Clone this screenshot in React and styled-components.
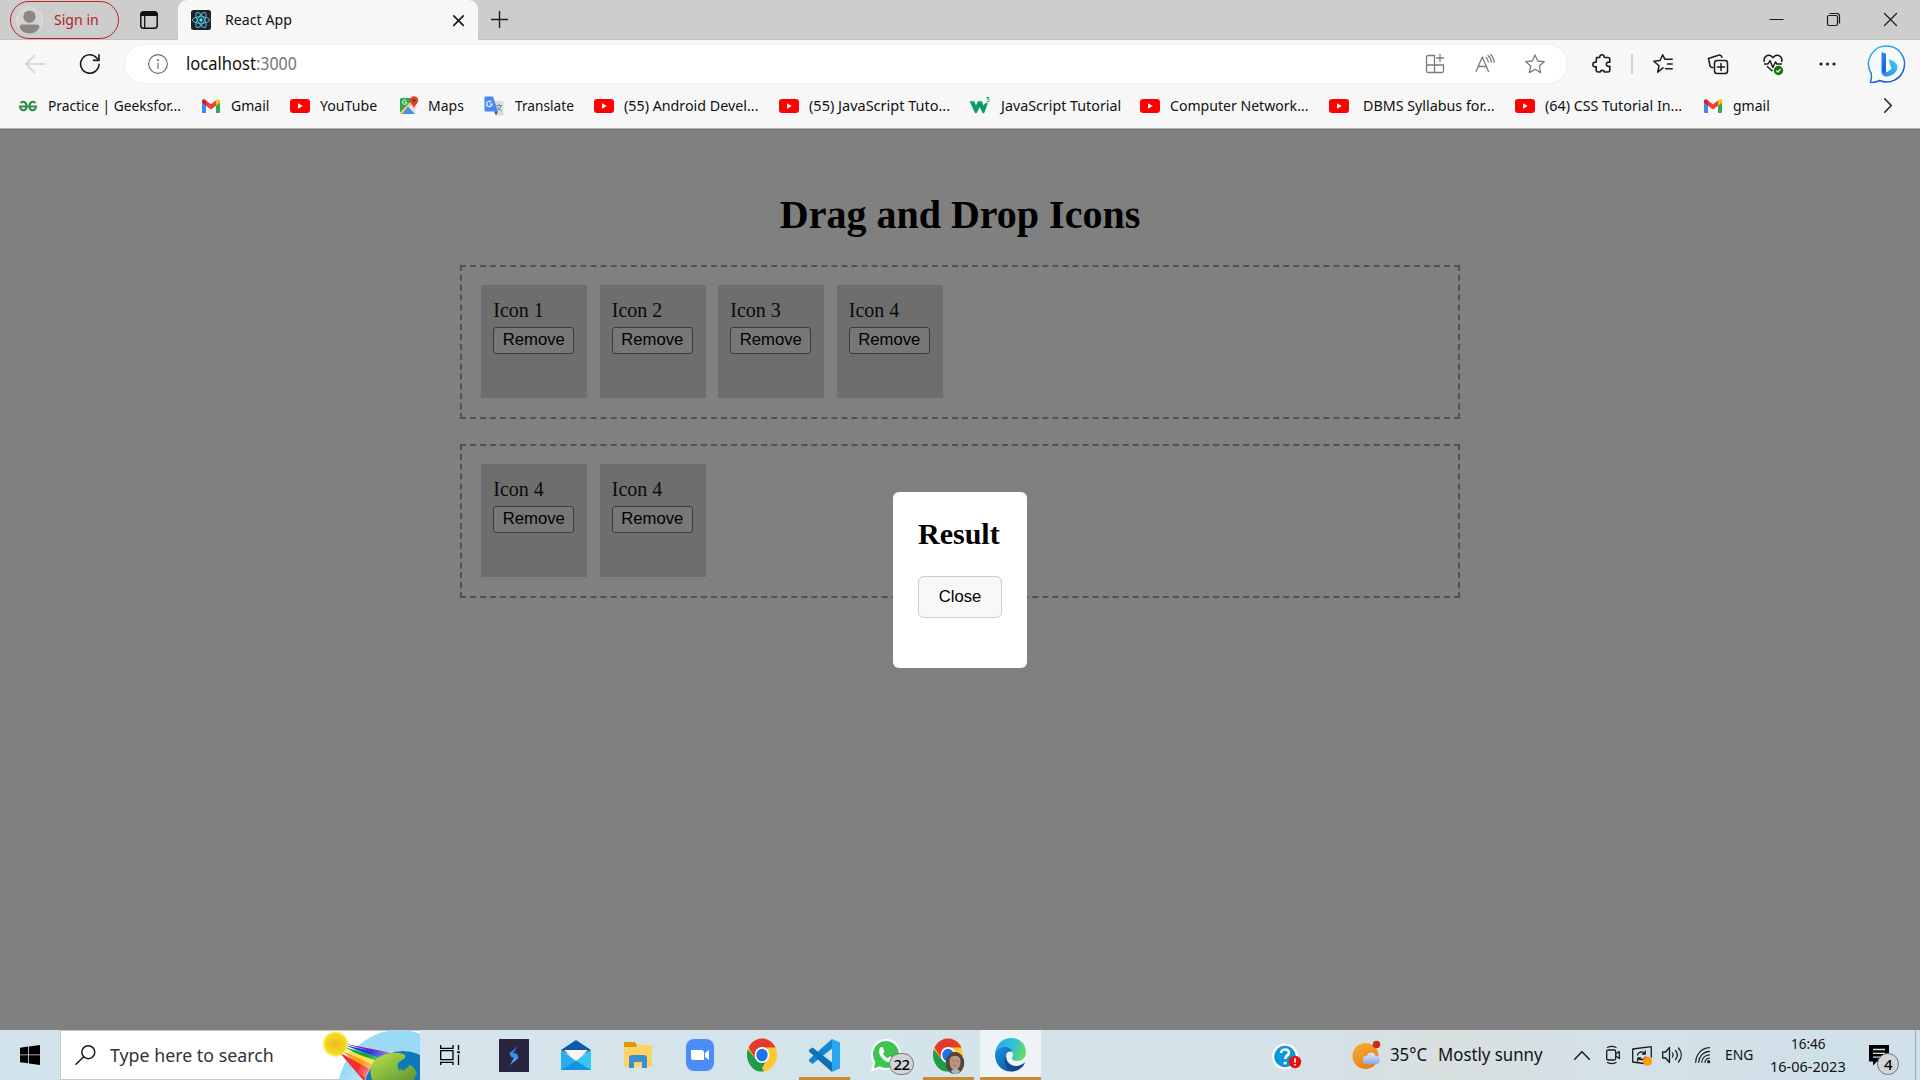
import React, { useLayoutEffect, useRef, useState } from 'react';
import styled, { createGlobalStyle, css } from 'styled-components';

const GlobalStyle = createGlobalStyle`
  * { box-sizing: border-box; }
  html, body { margin: 0; padding: 0; }
  body { width: 1920px; height: 1080px; overflow: hidden; }
  svg { display: block; flex: none; overflow: visible; }
`;

const UI_FONT = '"Noto Sans", "Open Sans", sans-serif';

const Screen = styled.div`
  width: 1920px;
  height: 1080px;
  display: flex;
  flex-direction: column;
  font-family: ${UI_FONT};
  color: #111;
`;

/* ---------- condensed label ---------- */
const LabelBox = styled.span`
  display: block;
  flex: none;
  width: ${(p) => p.$w}px;
  font-size: ${(p) => p.$size}px;
  line-height: ${(p) => p.$line || 24}px;
  height: ${(p) => p.$line || 24}px;
  color: ${(p) => p.$color || '#111'};
  white-space: pre;
`;
const LabelInner = styled.span`
  display: inline-block;
  transform-origin: 0 50%;
`;
function Label({ width, size = 14.4, line, color, children }) {
  const ref = useRef(null);
  const [scale, setScale] = useState(1);
  useLayoutEffect(() => {
    const fit = () => ref.current && setScale(width / ref.current.offsetWidth);
    fit();
    if (document.fonts) document.fonts.ready.then(fit);
  }, [width]);
  return (
    <LabelBox $w={width} $size={size} $line={line} $color={color}>
      <LabelInner ref={ref} style={{ transform: `scaleX(${scale})` }}>{children}</LabelInner>
    </LabelBox>
  );
}

/* ---------- tab strip ---------- */
const TabStrip = styled.div`
  height: 40px;
  flex: none;
  display: flex;
  background: #cdcdcd;
  box-shadow: inset 0 -1px #c2c2c2;
`;
const SignIn = styled.div`
  margin: 1px 0 0 10px;
  width: 109px;
  height: 38px;
  border: 1.5px solid #b4262c;
  border-radius: 19px;
  display: flex;
  align-items: center;
  padding-left: 5px;
  gap: 11px;
`;
const Workspaces = styled.div`
  width: 59px;
  padding: 11px 0 0 21px;
`;
const Tab = styled.div`
  width: 300px;
  height: 40px;
  background: #f7f7f7;
  border-radius: 9px 9px 0 0;
  display: flex;
  align-items: center;
  padding-left: 13px;
`;
const TabTitle = styled.div`
  width: 242px;
  padding-left: 14px;
`;
const NewTab = styled.div`
  padding: 11px 0 0 13px;
  flex: 1;
`;
const WindowButtons = styled.div`
  display: flex;
  align-items: center;
  gap: 44px;
  padding: 0 23px 1px 0;
`;

/* ---------- toolbar ---------- */
const Toolbar = styled.div`
  height: 48px;
  flex: none;
  background: #f7f7f7;
  display: flex;
  align-items: center;
`;
const NavButtons = styled.div`
  width: 125px;
  padding: 0 0 1px 25px;
  display: flex;
  gap: 35px;
`;
const AddressBar = styled.div`
  width: 1442px;
  height: 38px;
  border-radius: 19px;
  background: #fff;
  box-shadow: 0 0 3px rgba(0, 0, 0, 0.07);
  display: flex;
  align-items: center;
  padding: 0 22px 1px 23px;
`;
const Url = styled.div`
  display: flex;
  flex: 1;
  padding: 0 0 1px 18px;
`;
const AddressActions = styled.div`
  display: flex;
  align-items: center;
  gap: 30px;
`;
const Actions = styled.div`
  flex: 1;
  display: flex;
  align-items: center;
  padding-left: 25px;
`;
const ActionSlot = styled.div`
  width: ${(p) => p.$w}px;
`;
const Divider = styled.div`
  width: 2px;
  height: 20px;
  background: #cfcfcf;
  margin-right: 20px;
`;

/* ---------- bookmarks ---------- */
const BookmarkBar = styled.div`
  height: 41px;
  flex: none;
  background: #f7f7f7;
  border-bottom: 1px solid #b5b5b5;
  display: flex;
  align-items: center;
  padding: 0 0 5px 18px;
`;
const Bookmark = styled.div`
  width: ${(p) => p.$w}px;
  flex: none;
  display: flex;
  align-items: center;
  gap: ${(p) => p.$gap || 10}px;
`;
const More = styled.div`
  flex: 1;
`;

/* ---------- page ---------- */
const Page = styled.main`
  height: 901px;
  flex: none;
  background: #808080;
  border-top: 1px solid #777;
  font-family: "Liberation Serif", "Times New Roman", serif;
  display: grid;
  grid-template: 1fr / 1fr;
`;
const Board = styled.div`
  grid-area: 1 / 1;
  width: 1000px;
  justify-self: center;
  padding-top: 62px;
`;
const Title = styled.h1`
  margin: 0 0 27px;
  font-size: 40px;
  line-height: 46px;
  text-align: center;
  color: #000;
`;
const Zone = styled.section`
  height: 154px;
  margin-bottom: 25px;
  border: 2px dashed #525252;
  padding: 18px 19px;
  display: flex;
  gap: 12.5px;
`;
const IconCard = styled.div`
  width: 106px;
  height: 113px;
  background: #6e6e6e;
  padding: 14px 12.3px;
  font-size: 20px;
  line-height: 23px;
  color: #0a0a0a;
`;
const RemoveButton = styled.button`
  display: block;
  margin-top: 5px;
  width: 81px;
  height: 27px;
  padding: 0;
  border: 1px solid #3b3b3b;
  border-radius: 3px;
  background: #777;
  font: 16.67px/22px "Liberation Sans", Arial, sans-serif;
  padding-bottom: 2px;
  color: #000;
`;
const Modal = styled.div`
  grid-area: 1 / 1;
  place-self: center;
  width: 134px;
  height: 176px;
  border-radius: 6px;
  background: #fff;
  padding: 25px;
  z-index: 1;
`;
const ModalTitle = styled.h2`
  margin: 0 0 25px;
  font-size: 30px;
  line-height: 34px;
  white-space: nowrap;
  color: #000;
`;
const CloseButton = styled.button`
  display: block;
  width: 84px;
  height: 42px;
  padding: 0;
  border: 1px solid #ccc;
  border-radius: 6px;
  background: #f8f8f8;
  font: 16.67px/38px "Liberation Sans", Arial, sans-serif;
  color: #000;
`;

/* ---------- taskbar ---------- */
const Taskbar = styled.footer`
  height: 50px;
  flex: none;
  display: flex;
  background: linear-gradient(90deg, #d3e3ec 0, #d6e4ec 480px, #d3e4ea 900px, #d4e2ea 1250px, #d8dfdf 1450px, #d4e1e8 1600px, #cfe0e8 100%);
`;
const StartButton = styled.div`
  width: 60px;
  padding: 15px 0 0 20px;
`;
const Search = styled.div`
  width: 360px;
  background: #fff;
  border: 1px solid #c8c8c8;
  border-right: 0;
  display: flex;
  align-items: center;
  padding-left: 14px;
  gap: 14px;
`;
const SearchArt = styled.div`
  align-self: flex-start;
  margin: -1px 0 0 34px;
`;
const TaskView = styled.div`
  width: 63px;
  padding: 15px 0 0 20px;
`;
const AppButton = styled.div`
  width: 62px;
  flex: none;
  display: flex;
  justify-content: center;
  align-items: center;
  ${(p) => p.$open && css`
    background: linear-gradient(#cc8a2e, #cc8a2e) center bottom / 51px 3px no-repeat;
  `}
  ${(p) => p.$active && css`
    width: 61px;
    margin-left: 1px;
    background: linear-gradient(#cc8a2e, #cc8a2e) center bottom / 100% 3px no-repeat, #eef3f6;
  `}
`;
const Help = styled.div`
  margin-left: auto;
  width: 80px;
  padding-top: 13px;
`;
const Weather = styled.div`
  width: 222px;
  display: flex;
  align-items: center;
`;
const WeatherText = styled.div`
  display: flex;
  gap: 11px;
  padding-left: 9px;
`;
const Tray = styled.div`
  width: 196px;
  display: flex;
  align-items: center;
`;
const TraySlot = styled.div`
  width: ${(p) => p.$w}px;
  flex: none;
`;
const Clock = styled.div`
  width: 99px;
  display: flex;
  flex-direction: column;
  align-items: center;
  padding: 2px 23px 0 0;
`;
const Notifications = styled.div`
  width: 46px;
  padding-top: 15px;
`;
const ShowDesktop = styled.div`
  width: 5px;
  border-left: 1px solid #9eabb1;
`;
const Counted = styled.div`
  position: relative;
`;
const Count = styled.span`
  position: absolute;
  left: ${(p) => p.$x}px;
  top: ${(p) => p.$y}px;
  width: ${(p) => p.$w}px;
  height: 22px;
  border: 1px solid #777;
  border-radius: 11px;
  background: #d3d6d7;
  font: 500 15px/20px ${UI_FONT};
  text-align: center;
  letter-spacing: -0.7px;
  color: #000;
`;

/* ---------- icons ---------- */
const Line = ({ w = 20, h = 20, sw = 1.4, color = '#1b1b1b', children }) => (
  <svg width={w} height={h} viewBox={`0 0 ${w} ${h}`} fill="none" stroke={color} strokeWidth={sw} strokeLinecap="round" strokeLinejoin="round">
    {children}
  </svg>
);

const Avatar = () => (
  <svg width="27" height="27" viewBox="0 0 27 27">
    <circle cx="13.5" cy="13.5" r="13" fill="#d5d3d1" stroke="#e2e0df" />
    <circle cx="13.5" cy="9.7" r="6.2" fill="#8b8784" />
    <path d="M3.5 20.5c0-2 1-3 3-3h14c2 0 3 1 3 3-2 4-5.500 6-10 6s-8-2-10-6z" fill="#8b8784" />
  </svg>
);
const WorkspaceIcon = () => (
  <svg width="18" height="18" viewBox="0 0 18 18">
    <rect x=".8" y=".8" width="16.4" height="16.400" rx="2.800" fill="none" stroke="#111" strokeWidth="1.500" />
    <path d="M.5 5V3.500A3 3 0 0 1 3.500.5h11a3 3 0 0 1 3 3V5z" fill="#111" />
    <path d="M4.700 5v12" stroke="#111" strokeWidth="1.300" />
  </svg>
);
const ReactIcon = () => (
  <svg width="20" height="20" viewBox="0 0 20 20">
    <rect width="20" height="20" rx="2.500" fill="#20232a" />
    <g fill="none" stroke="#53c1de" strokeWidth="1">
      <ellipse cx="10" cy="10" rx="8.500" ry="3.300" />
      <ellipse cx="10" cy="10" rx="8.500" ry="3.300" transform="rotate(60 10 10)" />
      <ellipse cx="10" cy="10" rx="8.500" ry="3.300" transform="rotate(120 10 10)" />
    </g>
    <circle cx="10" cy="10" r="1.700" fill="#61dafb" />
  </svg>
);
const YouTube = () => (
  <svg width="20" height="20" viewBox="0 0 20 20">
    <rect x="0" y="3" width="20" height="14" rx="3.200" fill="#f00" />
    <path d="M8 7.300v5.400l4.700-2.700z" fill="#fff" />
  </svg>
);
const Gmail = () => (
  <svg width="20" height="20" viewBox="0 0 20 20">
    <path d="M1 6l4 3v8H2.300A1.300 1.300 0 0 1 1 15.700z" fill="#4285f4" />
    <path d="M19 6l-4 3v8h2.700a1.300 1.300 0 0 0 1.300-1.300z" fill="#34a853" />
    <path d="M15 4.500l1-.800c1.300-.9 3 0 3 1.500v1.500L15 9.800z" fill="#fbbc04" />
    <path d="M5 4.500l-1-.800c-1.300-.9-3 0-3 1.500v1.500l4 3.100z" fill="#c5221f" />
    <path d="M5 4.500l5 3.800 5-3.800v5.300l-5 3.800-5-3.800z" fill="#ea4335" />
  </svg>
);
const Geeks = () => (
  <svg width="20" height="20" viewBox="0 0 20 20" fill="none" stroke="#2f8d46" strokeWidth="2">
    <path d="M2.500 7C3.800 5.600 5.300 5.600 6.300 6c3 1.400 3.100 7 0 8.200-2.200.6-4-.9-4.300-3.600H18c-.3 2.700-2.100 4.200-4.300 3.600-3.100-1.200-3-6.800 0-8.200 1-.4 2.500-.4 3.800 1" />
  </svg>
);
const Maps = () => (
  <svg width="20" height="20" viewBox="0 0 20 20">
    <rect x="1" y="2" width="16" height="16" rx="1.500" fill="#e8e5df" />
    <path d="M1 3.500A1.500 1.500 0 0 1 2.500 2H12l1 5L1.500 17.500 1 16z" fill="#2ea35a" />
    <path d="M12 7l-10.500 11" stroke="#ffd04a" strokeWidth="2.600" />
    <path d="M9 10.500L3 18h13z" fill="#4a8cf6" />
    <path d="M5.800 6.200h2.100a2.200 2.200 0 1 1-.7-1.700" fill="none" stroke="#fff" strokeWidth="1" />
    <path d="M15 .3a4.200 4.200 0 0 0-4.200 4.200c0 3 3.700 4.500 4.200 8.500.5-4 4.200-5.500 4.200-8.500A4.200 4.200 0 0 0 15 .3z" fill="#e3402f" />
    <circle cx="15" cy="4.300" r="1.500" fill="#8e2a20" />
  </svg>
);
const Translate = () => (
  <svg width="20" height="20" viewBox="0 0 20 20">
    <path d="M9 5h10.500v13.500a1 1 0 0 1-1 1H12z" fill="#dcdcdc" />
    <path d="M1.500.5H9l5 15H1.500a1 1 0 0 1-1-1v-13a1 1 0 0 1 1-1z" fill="#4a86f5" />
    <path d="M10 15.500h4l-2 4z" fill="#2c59c9" />
    <path d="M5.500 8H8a2.700 2.700 0 1 1-.8-2" fill="none" stroke="#fff" strokeWidth="1.200" />
    <path d="M12.500 9.500h5.500M15 8.200v1.300M17 9.500c-.6 2.500-2 4-3.500 5M13.700 10.800c.8 1.700 2.200 3.200 3.800 4" fill="none" stroke="#73828c" strokeWidth="1" />
  </svg>
);
const W3 = () => (
  <svg width="20" height="20" viewBox="0 0 20 20" fill="none" stroke="#0a9a62">
    <path d="M0 5.500h4l2 4.500 2-4.500h3.500l2 4.500 1.500-2.500h2.500L14 17h-1.200L9.700 10.500 6.500 17H5.300z" fill="#0a9a62" strokeWidth=".5" strokeLinejoin="round" />
    <path d="M16.500 1.500h2.300l-1.300 1.800c1.500 0 2 .8 1.600 1.800-.3.900-1.600 1.300-2.700.5" strokeWidth="1" />
  </svg>
);
const Bing = () => (
  <svg width="38" height="39" viewBox="0 0 38 39">
    <defs>
      <linearGradient id="bo" x1=".1" y1="0" x2=".6" y2="1"><stop offset="0" stopColor="#2bc4f0" /><stop offset="1" stopColor="#2052cb" /></linearGradient>
      <linearGradient id="bb" x1="0" y1="0" x2=".4" y2="1"><stop offset="0" stopColor="#2b8ff2" /><stop offset="1" stopColor="#1a5edb" /></linearGradient>
      <linearGradient id="bs" x1="0" y1="1" x2="1" y2="0"><stop offset="0" stopColor="#2a7ff0" /><stop offset="1" stopColor="#3bd3ee" /></linearGradient>
    </defs>
    <path d="M19 1a18 18 0 1 1-8.500 34.500C8 37 4.500 37.700 1.500 37.300c.9-2.600 1.200-6 .8-8.800A18 18 0 0 1 19 1z" fill="#f5fbff" stroke="url(#bo)" strokeWidth="1.500" />
    <path d="M12.500 7l4.500 1.700v17.600l-1 3.700-3.500-2.700z" fill="url(#bb)" />
    <path d="M19.800 14.200c4.600 1.200 8.700 4.300 8.700 8.300 0 5-6.500 9-11 9-3 0-5-2-5-4.500 3 2 5.300.2 10.200-3.200l-1.400-3.200z" fill="url(#bs)" />
  </svg>
);

const Chrome = ({ photo }) => (
  <svg width="32" height="34" viewBox="0 0 32 34">
    <defs><clipPath id="cr"><ellipse cx="16" cy="17" rx="15" ry="16.500" /></clipPath></defs>
    <g clipPath="url(#cr)">
      <rect width="32" height="34" fill="#fcc934" />
      <path d="M0 9L9.500 21l9 13H0z" fill="#1e9d4c" />
      <path d="M0 0h32v9.500H16L9 20 1.500 8z" fill="#e33b2e" />
      <path d="M9.500 21l10 3L14 34H4z" fill="#1e9d4c" />
    </g>
    <ellipse cx="16" cy="17" rx="7.300" ry="8" fill="#fff" />
    <ellipse cx="16" cy="17" rx="5.700" ry="6.300" fill="#1a73e8" />
    {photo && (
      <g>
        <ellipse cx="23" cy="25" rx="9.300" ry="11" fill="#51463e" />
        <ellipse cx="23" cy="24" rx="5.500" ry="8" fill="#bd9480" />
        <path d="M16.500 21c1-8 10-8 12-1-4-3-8-3-12 1z" fill="#5a4032" />
        <path d="M19 33c2-2.500 7-2.500 9 0-2 4-7 4-9 0z" fill="#a4bab7" />
        <path d="M20.500 23h1.700m2.300 0h1.700m-4.500 4.800h2.600" stroke="#805446" strokeWidth=".8" />
      </g>
    )}
  </svg>
);
const Shift = () => (
  <svg width="30" height="33" viewBox="0 0 30 33">
    <defs><linearGradient id="sh" x1="0" y1="0" x2="0" y2="1"><stop offset="0" stopColor="#3d54e8" /><stop offset="1" stopColor="#46c8ee" /></linearGradient></defs>
    <rect width="30" height="33" fill="#272540" />
    <path d="M19 7l-8.500 7 1.200 3.500 3.300 1.300-4 7.200 8.500-7-1.200-4-3.800-1.300z" fill="url(#sh)" />
  </svg>
);
const Mail = () => (
  <svg width="30" height="32" viewBox="0 0 30 32">
    <path d="M0 11L15 1l15 10-15 9z" fill="#0a5aa8" />
    <path d="M3 11h24L15 23z" fill="#f5f5f5" />
    <path d="M0 11l15 11 15-11v20H0z" fill="#28aef0" />
    <path d="M30 11v20L15 22z" fill="#39c6f7" />
    <path d="M0 31l15-9 15 9z" fill="#1593dc" />
  </svg>
);
const Folder = () => (
  <svg width="28" height="28" viewBox="0 0 28 28">
    <path d="M0 1h11l2 3v3H0z" fill="#dd9b0a" />
    <path d="M0 6h12l2-2h14v22H0z" fill="#ffd262" />
    <path d="M5 27V17a3 3 0 0 1 3-3h12a3 3 0 0 1 3 3v10h-5v-6h-8v6z" fill="#3a8fd4" />
  </svg>
);
const Zoom = () => (
  <svg width="28" height="32" viewBox="0 0 28 32">
    <rect width="28" height="32" rx="8" fill="#4a8cfa" />
    <path d="M5 11h10.500a2.500 2.500 0 0 1 2.500 2.500V21H7.500A2.500 2.500 0 0 1 5 18.500zM19 14l4-3v10l-4-3z" fill="#fff" />
  </svg>
);
const VSCode = () => (
  <svg width="31" height="33" viewBox="0 0 31 33">
    <path d="M23 0l8 3.500v26L23 33z" fill="#2aa5f0" />
    <path d="M23 0v9.500L3.500 25 0 22.300v-1.800z" fill="#1585cf" />
    <path d="M23 33v-9.500L3.500 8.500 0 10.800v1.800z" fill="#0c71ba" />
  </svg>
);
const WhatsApp = () => (
  <svg width="30" height="33" viewBox="0 0 30 33">
    <path d="M15 0C23.500 0 30 7 30 15.500S23.500 31 15 31c-2.500 0-4.500-.5-6.500-1.600L0 32.500l2-9C.7 21 0 18.500 0 15.500 0 7 6.500 0 15 0z" fill="#fff" />
    <path d="M15 2c7.500 0 13 6 13 13.500S22.500 29 15 29c-2.400 0-4.500-.6-6.300-1.700L3 29.500l1.400-6.300A14 14 0 0 1 2 15.500C2 8 7.500 2 15 2z" fill="#3cc650" />
    <path d="M9.500 8.500l2-.5 2 4.500-1.500 2c1 2.200 2.700 3.800 5 4.800l1.800-2 4.200 2c0 3-2 4.200-4 4.200-5.500-.5-11-6.500-11-11 0-1.700.5-3 1.500-4z" fill="#fff" />
  </svg>
);
const Edge = () => (
  <svg width="31" height="34" viewBox="0 0 31 34">
    <defs>
      <linearGradient id="et" x1="0" y1=".3" x2="1" y2=".6"><stop offset="0" stopColor="#2aa9ea" /><stop offset=".55" stopColor="#34c1d5" /><stop offset="1" stopColor="#6bdc5d" /></linearGradient>
      <linearGradient id="eb" x1="0" y1="0" x2="1" y2="1"><stop offset="0" stopColor="#1793dd" /><stop offset="1" stopColor="#0c4f99" /></linearGradient>
    </defs>
    <path d="M0 16.500C.5 6.500 7.500 0 16 0c9 0 15 6.500 15 14 0 6-4 9-9 9-3.500 0-5.500-1.500-5-3 2-2.500 1.500-8-4.500-8.500C7 11 2 13 0 16.500z" fill="url(#et)" />
    <path d="M0 17c1-5 5-8 9.500-8 4 0 7 2 8 5-4-1.500-7 1.500-7 6 0 6.500 5 11.500 12.500 10.500-2 2-4.500 3-7.500 3C7 33.500 0 26 0 17z" fill="url(#eb)" />
    <path d="M11.500 16.500c-1.500 6 3 11.500 9.500 11.500 3.500 0 6-1.500 8-3 .7-.4 1 0 .6.700C27.500 30 22 33.500 17 33.500c-7-2-9-12-5.500-17z" fill="#134a91" />
  </svg>
);
const ArtSvg = styled.svg`
  overflow: hidden;
`;
const EarthArt = () => (
  <ArtSvg width="98" height="50" viewBox="0 0 98 50">
    <defs>
      <radialGradient id="sky" cx=".4" cy=".7"><stop offset="0" stopColor="#f0faff" /><stop offset=".5" stopColor="#cdeefc" /><stop offset="1" stopColor="#9adaf6" /></radialGradient>
      <radialGradient id="sun"><stop offset="0" stopColor="#edbb22" /><stop offset=".75" stopColor="#f0dc1e" /><stop offset="1" stopColor="#fff27a" stopOpacity="0" /></radialGradient>
      <linearGradient id="land" x1="0" y1="0" x2="1" y2="1"><stop offset="0" stopColor="#b5e445" /><stop offset="1" stopColor="#5f9436" /></linearGradient>
      <linearGradient id="fade" gradientUnits="userSpaceOnUse" x1="50" y1="20" x2="62" y2="32"><stop offset="0" stopColor="#e8f7ff" stopOpacity="0" /><stop offset="1" stopColor="#e8f7ff" stopOpacity=".5" /></linearGradient>
    </defs>
    <circle cx="77" cy="61" r="61" fill="url(#sky)" />
    <path d="M22 13.500l48 9.500-3 3z" fill="#8a1a9e" />
    <path d="M22 15l42 9-5 5z" fill="#1c3ce0" />
    <path d="M22 17l38 11-7 5z" fill="#12a53a" />
    <path d="M21 19l34 12-6 7z" fill="#ffe03a" />
    <path d="M19 20l32 15-4 8z" fill="#ff9b1e" />
    <path d="M17 22l30 17-5 12z" fill="#f92b2b" />
    <path d="M44 20l30 2-28 28-10-8z" fill="url(#fade)" />
    <circle cx="13.500" cy="14" r="14" fill="url(#sun)" />
    <circle cx="81" cy="60" r="39" fill="#0e78b8" />
    <path d="M50 34c5-8 15-12 28-11 5 1 7 3 4 6-7 3-8 7-4 12 1-4 4-6 8-8l6 5 3 5-3 7H50c-2-6-2-10 0-16z" fill="url(#land)" />
    <path d="M76 34l5-4 7 1-1 5-6 5z" fill="#0e78b8" />
  </ArtSvg>
);

const yt = <YouTube />;
const bookmarks = [
  { icon: <Geeks />, text: 'Practice | Geeksfor...', w: 183, tw: 133 },
  { icon: <Gmail />, text: 'Gmail', w: 89, tw: 38 },
  { icon: yt, text: 'YouTube', w: 109, tw: 57 },
  { icon: <Maps />, text: 'Maps', w: 85, tw: 36, gap: 9 },
  { icon: <Translate />, text: 'Translate', w: 110, tw: 59, gap: 10.5 },
  { icon: yt, text: '(55) Android Devel...', w: 185, tw: 135, gap: 10 },
  { icon: yt, text: '(55) JavaScript Tuto...', w: 191, tw: 141, gap: 10 },
  { icon: <W3 />, text: 'JavaScript Tutorial', w: 170, tw: 120, gap: 10.5 },
  { icon: yt, text: 'Computer Network...', w: 189, tw: 138 },
  { icon: yt, text: 'DBMS Syllabus for...', w: 186, tw: 132, gap: 14 },
  { icon: yt, text: '(64) CSS Tutorial In...', w: 188, tw: 137 },
  { icon: <Gmail />, text: 'gmail', w: 181, tw: 37 },
];

const zones = [
  ['Icon 1', 'Icon 2', 'Icon 3', 'Icon 4'],
  ['Icon 4', 'Icon 4'],
];

function Browser() {
  return (
    <>
      <TabStrip>
        <SignIn>
          <Avatar />
          <Label width={45} size={14.4} color="#ad1f26">Sign in</Label>
        </SignIn>
        <Workspaces><WorkspaceIcon /></Workspaces>
        <Tab>
          <ReactIcon />
          <TabTitle><Label width={67}>React App</Label></TabTitle>
          <Line w={11} h={11} sw={1.7}><path d="M.8.8l9.500 9.500M10.300.8L.8 10.300" /></Line>
        </Tab>
        <NewTab><Line w={17} h={17}><path d="M8.500 .5v16M.5 8.500h16" /></Line></NewTab>
        <WindowButtons>
          <Line w={13} h={13} sw={1.2}><path d="M0 6.500h13" /></Line>
          <Line w={13} h={13} sw={1.2}><rect x=".5" y="2.500" width="10" height="10" rx="1.500" /><path d="M3 .5h7a2.500 2.500 0 0 1 2.500 2.500v7" /></Line>
          <Line w={13} h={13} sw={1.2}><path d="M.5.5l12 12M12.500.5l-12 12" /></Line>
        </WindowButtons>
      </TabStrip>
      <Toolbar>
        <NavButtons>
          <Line color="#cfcfcf" sw={1.5}><path d="M19.500 10H.8M9.500 1.500L.8 10l8.700 8.500" /></Line>
          <Line sw={1.6}><path d="M19 10.300A9.200 9.200 0 1 1 16.800 4L19 6.200M19 .8v5.600h-5.500" /></Line>
        </NavButtons>
        <AddressBar>
          <Line color="#6d6d6d" sw={1.2}><circle cx="10" cy="10" r="9.300" /><path d="M10 9v5.500" /><circle cx="10" cy="6" r=".5" fill="#6d6d6d" /></Line>
          <Url>
            <Label width={70} size={17.5}>localhost</Label>
            <Label width={41} size={17.5} color="#767676">:3000</Label>
          </Url>
          <AddressActions>
            <Line color="#7b7b7b" sw={1.3}><path d="M9 1.500H3a1.500 1.500 0 0 0-1.500 1.500v14A1.500 1.500 0 0 0 3 18.500h14a1.500 1.500 0 0 0 1.500-1.500v-6h-17M9.500 1.500v17M15 .5v7M11.500 4h7" /></Line>
            <Line color="#7b7b7b" sw={1.3}><path d="M1 17.500L7.300 3l6.200 14.500M3.200 12.500h8.100M11 3.500c1.500 1.200 2.300 2.800 2.300 4.700M13 1.500c2.200 1.800 3.300 4 3.300 6.700M15.500.5c2.300 2 3.500 4.700 3.500 7.700" /></Line>
            <Line color="#7b7b7b" sw={1.3}><path d="M10 1l2.700 6 6.500.7-4.900 4.400 1.400 6.500-5.700-3.300-5.700 3.300 1.400-6.500L.8 7.700 7.300 7z" /></Line>
          </AddressActions>
        </AddressBar>
        <Actions>
          <ActionSlot $w={39}>
            <Line sw={1.6}><path d="M4.500 3.500h3.200c0-1.700 1-2.700 2.300-2.700s2.300 1 2.300 2.700h3.500a2 2 0 0 1 2 2v2.700c-2.200-.4-3.500.4-3.500 2s1.300 2.500 3.500 2V16a2 2 0 0 1-2 2h-3.300c-.3-1-1.200-1.600-2.200-1.600S8.400 17 8.100 18H6.200a2 2 0 0 1-2-2v-3.200C2 13 .8 12.200.8 10.500S2 8 4.200 8.200z" /></Line>
          </ActionSlot>
          <Divider />
          <ActionSlot $w={55}>
            <Line sw={1.5}><path d="M12.600 5.300h6.600M14.500 10h4.700M12.600 14.700h6.600M10 13.800l-5.300 4.300 1.300-6.300L.8 7.200 7 6.500l2.700-5.700 2.300 4.500" /></Line>
          </ActionSlot>
          <ActionSlot $w={55}>
            <Line sw={1.5}><rect x="6.500" y="6.500" width="13" height="13" rx="2.500" /><path d="M13 9.500v7M9.500 13h7M5 13.500l-1.500-.3A3 3 0 0 1 1.700 10L.5 4.500l10-3.300a3 3 0 0 1 3.500 2" /></Line>
          </ActionSlot>
          <ActionSlot $w={56}>
            <svg width="20" height="21" viewBox="0 0 20 21" fill="none" stroke="#1b1b1b" strokeWidth="1.500" strokeLinejoin="round">
              <path d="M1.400 8C-.2 3.500 4.500-.6 8.500 2.200L10 3.600l1.500-1.400c4-2.800 8.700 1.300 7.100 5.800M4 12.300l5.500 5M1 10h4l2-3.500 2.800 7L12.500 8l1.300 2H19" />
              <circle cx="15.500" cy="16.500" r="4.700" fill="#107c10" stroke="none" />
              <path d="M13.400 16.500l1.500 1.600 2.700-3" stroke="#fff" strokeWidth="1.200" />
            </svg>
          </ActionSlot>
          <ActionSlot $w={50}>
            <svg width="17" height="20" viewBox="0 0 17 20" fill="#1b1b1b"><circle cx="2" cy="10" r="1.600" /><circle cx="8.500" cy="10" r="1.600" /><circle cx="15" cy="10" r="1.600" /></svg>
          </ActionSlot>
          <Bing />
        </Actions>
      </Toolbar>
      <BookmarkBar>
        {bookmarks.map((b, i) => (
          <Bookmark key={i} $w={b.w} $gap={b.gap}>
            {b.icon}
            <Label width={b.tw}>{b.text}</Label>
          </Bookmark>
        ))}
        <More><Line w={8} h={15}><path d="M.7.700L7.300 7.500.7 14.300" /></Line></More>
      </BookmarkBar>
    </>
  );
}

function WindowsTaskbar() {
  return (
    <Taskbar>
      <StartButton>
        <svg width="20" height="20" viewBox="0 0 20 20"><path d="M0 2.800l8.200-1.200v7.900H0zM9 1.500L20 0v9.500H9zM0 10.300h8.200v8L0 17.200zM9 10.300h11V20L9 18.400z" /></svg>
      </StartButton>
      <Search>
        <Line w={21} h={20} sw={1.5}><circle cx="13.300" cy="7.200" r="6.500" /><path d="M8.700 11.800L1 19.300" /></Line>
        <Label width={164} size={18} color="#333">Type here to search</Label>
        <SearchArt><EarthArt /></SearchArt>
      </Search>
      <TaskView>
        <svg width="20" height="20" viewBox="0 0 20 20" fill="none" stroke="#000" strokeWidth="1.300">
          <path d="M.7 0v3.300h12.300V0M.7 5.700h12.300v9H.7zM.7 20v-2.700h12.300V20M18.500 0v20" />
          <path d="M16.500 5.700h4v3.300h-4z" fill="#000" stroke="#d6e4ec" />
        </svg>
      </TaskView>
      <AppButton><Shift /></AppButton>
      <AppButton><Mail /></AppButton>
      <AppButton><Folder /></AppButton>
      <AppButton><Zoom /></AppButton>
      <AppButton><Chrome /></AppButton>
      <AppButton $open><VSCode /></AppButton>
      <AppButton><Counted><WhatsApp /><Count $x={18} $y={14} $w={25}>22</Count></Counted></AppButton>
      <AppButton $open><Chrome photo /></AppButton>
      <AppButton $active><Edge /></AppButton>
      <Help>
        <svg width="30" height="28" viewBox="0 0 30 28">
          <circle cx="13" cy="13.500" r="13" fill="#fff" /><circle cx="13" cy="13.500" r="10.700" fill="#0c98d8" />
          <path d="M9 10c.2-5 8.500-4.500 8 0-.3 2.500-3.800 2.500-3.800 6" fill="none" stroke="#fff" strokeWidth="2.600" /><circle cx="13.100" cy="20" r="1.600" fill="#fff" />
          <circle cx="23" cy="19" r="6.200" fill="#e8110f" /><path d="M23 15.300v4.200M23 21v1.600" stroke="#fff" strokeWidth="1.700" />
        </svg>
      </Help>
      <Weather>
        <svg width="29" height="32" viewBox="0 0 29 32">
          <defs>
            <linearGradient id="ws" x1=".2" y1="0" x2=".7" y2="1"><stop offset="0" stopColor="#f3ac2f" /><stop offset="1" stopColor="#ee7b18" /></linearGradient>
            <linearGradient id="wc" x1="0" y1="0" x2="0" y2="1"><stop offset="0" stopColor="#dfeaff" /><stop offset="1" stopColor="#86aae8" /></linearGradient>
          </defs>
          <circle cx="13.500" cy="17" r="13" fill="url(#ws)" />
          <path d="M14.500 25a4 4 0 0 1 .3-8c1.200-4.500 7.500-4.500 8.700-.3 5.500-.2 5.800 8.300.5 8.300z" fill="url(#wc)" />
          <circle cx="24.500" cy="5.500" r="3.800" fill="#c62c20" />
        </svg>
        <WeatherText>
          <Label width={37} size={17.3}>35°C</Label>
          <Label width={105} size={17.3}>Mostly sunny</Label>
        </WeatherText>
      </Weather>
      <Tray>
        <TraySlot $w={32}><Line w={16} h={9} sw={1.5}><path d="M.7 8.300L8 .8l7.300 7.500" /></Line></TraySlot>
        <TraySlot $w={26}>
          <Line w={14} h={18} sw={1.3}><rect x=".7" y="4" width="9" height="10" rx="1.500" /><path d="M9.700 8l3.600-2.500v7L9.700 10M1.500 1.500c2.500-1.300 6-1.300 8.500 0M1.500 16.500c2.500 1.300 6 1.300 8.500 0" /></Line>
        </TraySlot>
        <TraySlot $w={30}>
          <Line w={20} h={19} sw={1.3}><path d="M19.300 11V.7L.7 3v13l11 1.500M5.500 9c.8-3.500 5.500-4 7.500-1.500M13.300 5v3h-3M13.500 11c-1 2.800-5 3.500-7.300 1.200M5.800 15v-3h3" /><circle cx="15.500" cy="15.300" r="4.500" fill="#ff9800" stroke="none" /></Line>
        </TraySlot>
        <TraySlot $w={33}>
          <Line w={20} h={18} sw={1.3}><path d="M.7 6h3l3.800-4.500v15L3.700 12h-3zM10.500 7c.8 1.200.8 2.800 0 4M13.500 4.500c2.300 2.700 2.300 6.300 0 9M16.500 2c3.700 4.300 3.700 9.700 0 14" /></Line>
        </TraySlot>
        <TraySlot $w={30}>
          <Line w={15} h={16} sw={1.2}><path d="M.7 15.300C1 7.500 6.500 1 14.500.7M3.700 15.300c.3-6 4.500-10.600 10.800-11M6.800 15.300c.2-4 3-7.200 7.700-7.500M10 15.300c.2-2.300 1.700-4 4.500-4.300" /><circle cx="13.700" cy="14.700" r="1" fill="#111" /></Line>
        </TraySlot>
        <Label width={28} size={14.4}>ENG</Label>
      </Tray>
      <Clock>
        <Label width={35} size={14.7} line={22}>16:46</Label>
        <Label width={76} size={14.7}>16-06-2023</Label>
      </Clock>
      <Notifications>
        <Counted>
          <svg width="20" height="21" viewBox="0 0 20 21"><path d="M0 0h20v16.500H8l-4 4v-4H0z" /><path d="M4 4.500h12M4 8.300h12M4 12.200h7" stroke="#d3e1e8" strokeWidth="1.300" /></svg>
          <Count $x={8} $y={8} $w={22}>4</Count>
        </Counted>
      </Notifications>
      <ShowDesktop />
    </Taskbar>
  );
}

export default function App() {
  return (
    <Screen>
      <GlobalStyle />
      <Browser />
      <Page>
        <Board>
          <Title>Drag and Drop Icons</Title>
          {zones.map((items, z) => (
            <Zone key={z}>
              {items.map((name, i) => (
                <IconCard key={i}>
                  {name}
                  <RemoveButton>Remove</RemoveButton>
                </IconCard>
              ))}
            </Zone>
          ))}
        </Board>
        <Modal>
          <ModalTitle>Result</ModalTitle>
          <CloseButton>Close</CloseButton>
        </Modal>
      </Page>
      <WindowsTaskbar />
    </Screen>
  );
}
